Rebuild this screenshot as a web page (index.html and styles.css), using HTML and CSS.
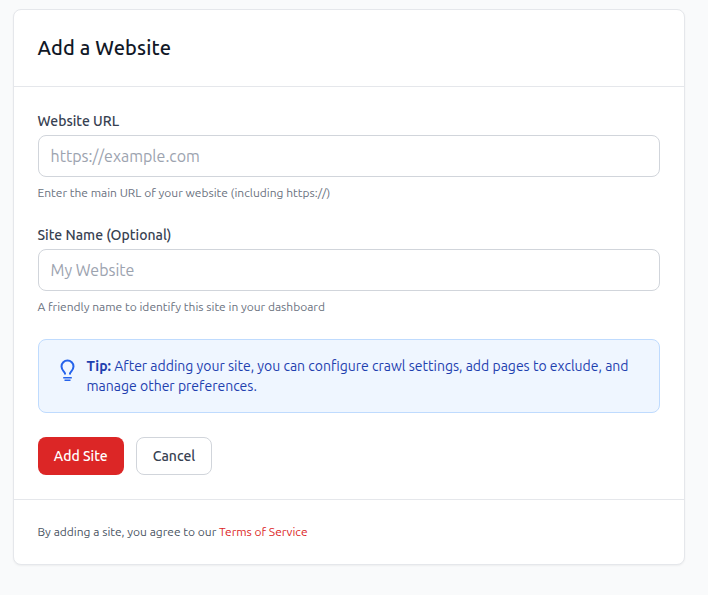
FILE: index.html
```html
<!DOCTYPE html>
<html lang="en">
<head>
    <meta charset="UTF-8">
    <meta name="viewport" content="width=device-width, initial-scale=1.0">
    <title>Add a Website</title>
    <link rel="stylesheet" href="styles.css">
</head>
<body>
    <div class="card">
        <div class="card-header">
            <h1>Add a Website</h1>
        </div>

        <form class="card-body">
            <div class="form-group">
                <label for="url">Website URL</label>
                <input type="text" id="url" placeholder="https://example.com">
                <p class="help">Enter the main URL of your website (including https://)</p>
            </div>
            <div class="form-group">
                <label for="name">Site Name (Optional)</label>
                <input type="text" id="name" placeholder="My Website">
                <p class="help">A friendly name to identify this site in your dashboard</p>
            </div>

            <div class="tip">
                <svg class="tip-icon" viewBox="0 0 24 24" fill="none" stroke="currentColor" stroke-width="2" stroke-linejoin="round">
                    <path d="M10 16.500v-1c0-1.500-3.500-3.200-3.500-7a6 6 0 0 1 12 0c0 3.800-3.500 5.500-3.500 7v1"/>
                    <path stroke-width="1.600" d="M8.200 19.700h8.600M9.500 22.300h6"/>
                </svg>
                <p><strong>Tip:</strong> After adding your site, you can configure crawl settings, add pages to exclude, and manage other preferences.</p>
            </div>

            <div class="actions">
                <button type="button" class="btn btn-primary">Add Site</button>
                <button type="button" class="btn btn-secondary">Cancel</button>
            </div>
        </form>

        <div class="card-footer">
            <p>By adding a site, you agree to our <a href="#">Terms of Service</a></p>
        </div>
    </div>
</body>
</html>
```

FILE: styles.css
```css
* {
    margin: 0;
    padding: 0;
    box-sizing: border-box;
}
body {
    font-family: "Ubuntu", "Noto Sans", sans-serif;
    background: #f9fafb;
    min-height: 100vh;
    padding: 9px 0 30px 12.5px;
}
.card {
    width: 672px;
    background: #fff;
    border: 1px solid #e5e7eb;
    border-radius: 8px;
    box-shadow: 0 1px 2px rgba(0, 0, 0, 0.05);
}
.card-header {
    padding: 24px;
    border-bottom: 1px solid #e5e7eb;
}
.card-header h1 {
    font-size: 20px;
    line-height: 28px;
    font-weight: 500;
    letter-spacing: 0.15px;
    color: #111827;
}
.card-body {
    padding: 24px;
}
.form-group {
    margin-bottom: 24px;
}
.form-group label {
    display: block;
    font-size: 14px;
    line-height: 20px;
    font-weight: 500;
    color: #374151;
    margin-bottom: 4px;
}
.form-group input {
    display: block;
    width: 100%;
    height: 42px;
    padding: 0 12px;
    border: 1px solid #d1d5db;
    border-radius: 8px;
    font-family: inherit;
    font-size: 16px;
    color: #111827;
    background: #fff;
}
.form-group input::placeholder {
    color: #9ca3af;
}
.help {
    margin-top: 8px;
    font-size: 12px;
    line-height: 16px;
    color: #6b7280;
}
.tip {
    display: flex;
    gap: 8px;
    padding: 16px;
    margin-bottom: 24px;
    background: #eff6ff;
    border: 1px solid #bfdbfe;
    border-radius: 8px;
    font-size: 14px;
    line-height: 20px;
    color: #1e40af;
}
.tip-icon {
    flex: none;
    width: 24px;
    height: 24px;
    margin-top: 2px;
    color: #2563eb;
}
.actions {
    display: flex;
    gap: 12px;
}
.btn {
    height: 38px;
    padding: 0 16px;
    border-radius: 8px;
    font-family: inherit;
    font-size: 14px;
    font-weight: 500;
}
.btn-primary {
    padding: 0 16.3px;
    background: #dc2626;
    border: none;
    color: #fff;
}
.btn-secondary {
    padding: 0 15.7px;
    background: #fff;
    border: 1px solid #d1d5db;
    color: #374151;
}
.card-footer {
    padding: 24px;
    border-top: 1px solid #e5e7eb;
    font-size: 12px;
    line-height: 16px;
    color: #4b5563;
}
.card-footer a {
    color: #dc2626;
    text-decoration: none;
}
```
